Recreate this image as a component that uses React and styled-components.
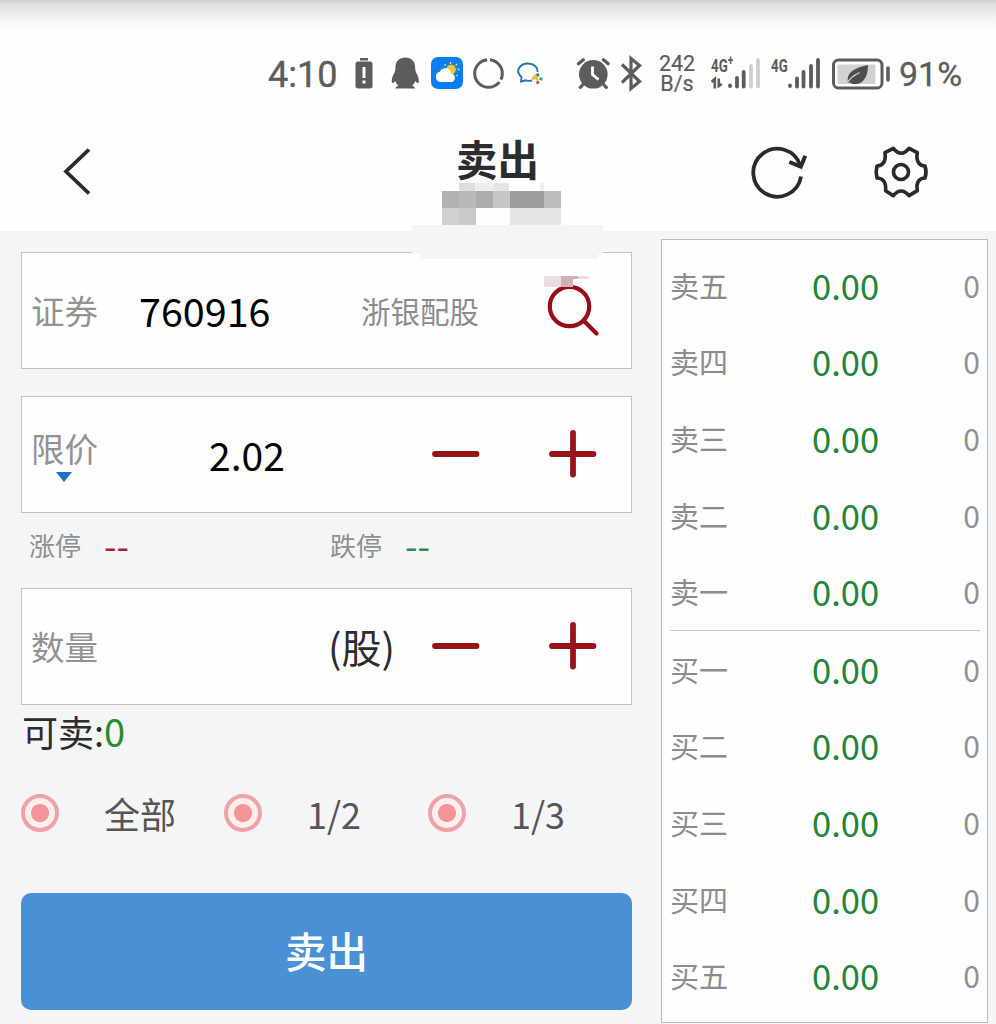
import styled, { createGlobalStyle } from "styled-components"

const sellRows = ["卖五", "卖四", "卖三", "卖二", "卖一"]
const buyRows = ["买一", "买二", "买三", "买四", "买五"]
const portions = [
    { label: "全部", width: 203 },
    { label: "1/2", width: 204 },
    { label: "1/3", width: 150 },
]

const StatusBar = () => {
    return (
        <StyledStatus>
            <Clock>4:10</Clock>
            <StatusIcon $left={18} width="18" height="40" viewBox="355 54 18 40">
                <path d="M360 58h8v2.500h-8z" fill="#5c5c5c" />
                <rect x="355.500" y="61.500" width="17" height="27" rx="2.500" fill="#5c5c5c" />
                <path d="M364 67v11M364 80.500v3" stroke="#fff" strokeWidth="3" />
            </StatusIcon>
            <StatusIcon $left={18} width="28" height="40" viewBox="391 54 28 40">
                <path d="M405.300 57.500c-6 0-9.800 4-9.800 9.500 0 3-.5 5-2 7.500-1.500 3-2.200 6-1.500 8.500 1.500 0 2.500-1 3.300-2 .7 2 1.700 3.500 3.200 4.700-1.500.5-3 1.500-3.200 2.800h20c-.2-1.300-1.700-2.300-3.200-2.800 1.500-1.200 2.500-2.700 3.200-4.700.8 1 1.800 2 3.300 2 .7-2.500 0-5.500-1.500-8.500-1.500-2.500-2-4.500-2-7.500 0-5.500-3.800-9.500-9.800-9.500z" fill="#5c5c5c" />
            </StatusIcon>
            <StatusIcon $left={12} width="32" height="40" viewBox="431 54 32 40">
                <rect x="431" y="57" width="32" height="32" rx="7" fill="#087ff0" />
                <circle cx="451" cy="69.500" r="4.800" fill="#ffc526" />
                <path d="M450.500 62v2M444.500 64l1.300 1.500M457 64l-1.300 1.500M459.500 69.500h-2M457.500 76l-1.300-1" stroke="#ffdc62" strokeWidth="1.300" />
                <path d="M440.500 82a5.200 5.200 0 0 1-.8-10.200 6 6 0 0 1 11.400 1.600 4.500 4.500 0 0 1 1 8.600z" fill="#fff" />
            </StatusIcon>
            <StatusIcon $left={10} width="32" height="40" viewBox="473 54 32 40">
                <circle cx="488.500" cy="73.500" r="13.800" fill="none" stroke="#5c5c5c" strokeWidth="3" />
                <path d="M488.500 57v5M498.500 80l6 3" stroke="#fff" strokeWidth="2.800" />
            </StatusIcon>
            <StatusIcon $left={12} width="27" height="40" viewBox="517 54 27 40">
                <path d="M532 80.500c-2 .6-4 .5-6-.2l-5 1.200.5-4.500c-7-6-1.500-13.500 6.500-13.500 6 0 10 4 9.500 8.500" fill="none" stroke="#1f76b4" strokeWidth="1.900" />
                <path d="M537 73.500l1.500 3" stroke="#2f86c0" strokeWidth="2.800" />
                <path d="M539.500 78.300l3 1" stroke="#5c9c63" strokeWidth="2.800" />
                <path d="M538.500 81l-1.500 2.800" stroke="#b3604a" strokeWidth="2.800" />
                <path d="M532.500 79.500l2.500-3.500 2.500 4" fill="none" stroke="#f0b82c" strokeWidth="2.600" />
            </StatusIcon>
            <StatusIcon $left={32} width="34" height="40" viewBox="576 54 34 40">
                <circle cx="593.300" cy="74.300" r="14.300" fill="#5c5c5c" />
                <path d="M578.500 63.800l4.800-4M608.200 63.800l-4.800-4M583 84.500l-2.700 2.800M603.600 84.500l2.700 2.800" stroke="#5c5c5c" strokeWidth="3.200" strokeLinecap="round" />
                <path d="M592.500 66.500v8l6 5" fill="none" stroke="#fff" strokeWidth="2.800" />
            </StatusIcon>
            <StatusIcon $left={11} width="21" height="40" viewBox="621 54 21 40">
                <path d="M622 64.500L639.500 81.500l-8.500 7V58.500l8.500 7L622 82.500" fill="none" stroke="#5c5c5c" strokeWidth="3.200" />
            </StatusIcon>
            <Speed>242 B/s</Speed>
            <Network $left={15}>
                <NetworkType>4G<sup>+</sup></NetworkType>
                <Bars width="50" height="40" viewBox="711 54 50 40">
                    <path d="M711.500 82l3.300-3v9.500M718.800 78.500v7.500l3-2" fill="none" stroke="#5c5c5c" strokeWidth="2.600" />
                    <g stroke="#5c5c5c" strokeWidth="3.800" strokeLinecap="round">
                        <path d="M730 86v-.5M737 86.500v-8.500M743.700 86.500v-14.500" />
                        <path d="M751 86.500V66M758 86.500V60" stroke="#cfcfcf" />
                    </g>
                </Bars>
            </Network>
            <Network $left={10}>
                <NetworkType>4G</NetworkType>
                <Bars width="50" height="40" viewBox="771 54 50 40">
                    <path d="M790 86v-.5M797 86.500v-8M803.500 86.500V72M811 86.500V66M818 86.500V60" stroke="#5c5c5c" strokeWidth="3.800" strokeLinecap="round" />
                </Bars>
            </Network>
            <StatusIcon $left={11} width="58" height="40" viewBox="832 54 58 40">
                <rect x="833.500" y="60" width="48.500" height="28" rx="5" fill="#fff" stroke="#5c5c5c" strokeWidth="3" />
                <rect x="837.500" y="64.500" width="38" height="19.500" rx="1" fill="#d2d2d2" />
                <path d="M848 83c-2-10 5-15 20-18 0 12-5 20-14 19-2 0-3-.6-4-1.500z" fill="#4d4d4d" />
                <path d="M847.500 83c2-5 7-8 12-10.500" fill="none" stroke="#d2d2d2" strokeWidth="1.300" />
                <path d="M888 68v12" stroke="#5c5c5c" strokeWidth="3.600" strokeLinecap="round" />
            </StatusIcon>
            <Percent>91%</Percent>
        </StyledStatus>
    )
}

const Redaction = () => {
    return (
        <Mosaic width="200" height="110" viewBox="410 180 200 110" shapeRendering="crispEdges">
            <path d="M459 183h16v8h-16z" fill="#dedede" />
            <path d="M475 183h18v8h-18zM540 183h4v8h-4z" fill="#eeeeee" />
            <path d="M493 183h16v8h-16z" fill="#e5e5e5" />
            <path d="M442 191h17v17h-17z" fill="#b2b2b2" />
            <path d="M459 191h17v17h-17z" fill="#b9b9b9" />
            <path d="M476 191h17v17h-17z" fill="#adadad" />
            <path d="M493 191h17v17h-17z" fill="#c6c6c6" />
            <path d="M510 191h34v17h-34z" fill="#9e9e9e" />
            <path d="M544 191h17v17h-17z" fill="#bdbdbd" />
            <path d="M442 208h17v17h-17z" fill="#d0d0d0" />
            <path d="M459 208h17v17h-17z" fill="#cacaca" />
            <path d="M510 208h51v17h-51z" fill="#e6e6e6" />
            <path d="M412 225h191v29h-5v5H420v-5h-8z" fill="#f4f5f5" />
            <path d="M544 276h17v11h-17zM578 276h11v3h-11z" fill="#ecdcdf" />
            <path d="M561 276h17v3h-5v8h-12z" fill="#d5adb5" />
        </Mosaic>
    )
}

const Header = () => {
    return (
        <StyledHeader>
            <StatusBar />
            <NavBar>
                <NavIcon width="28" height="50" viewBox="63 147 28 50">
                    <path d="M89 149.500L66 171.500l23 22" strokeWidth="3.800" />
                </NavIcon>
                <Title>卖出</Title>
                <Actions>
                    <NavIcon width="58" height="54" viewBox="750 145 58 54">
                        <path d="M801 176.500a24 24 0 1 1-.8-11" strokeWidth="3.800" />
                        <path d="M789.300 162l11.500 4.700 4.500-11" strokeWidth="4" />
                    </NavIcon>
                    <NavIcon width="56" height="54" viewBox="459 74 168 162">
                        <path
                            d="M471 137Q466 155 471 173C487 173 499 183 497 211L520 226Q543 198 567 226L592 211C587 184 600 173 615 173Q621 155 615 137C599 136 587 125 592 97L567 84Q543 113 520 84L495 97C499 125 487 136 471 137z"
                            strokeWidth="11"
                            strokeLinejoin="round"
                        />
                        <circle cx="543" cy="155" r="22.500" strokeWidth="11" />
                    </NavIcon>
                </Actions>
            </NavBar>
            <Redaction />
        </StyledHeader>
    )
}

const Stepper = () => {
    return (
        <StepperGroup>
            <StepIcon viewBox="0 0 48 48">
                <path d="M3 24h41.500" />
            </StepIcon>
            <StepIcon viewBox="0 0 48 48">
                <path d="M3 24h41.500M24 3v41.500" />
            </StepIcon>
        </StepperGroup>
    )
}

const OrderForm = () => {
    return (
        <Form>
            <Field>
                <FieldLabel>证券</FieldLabel>
                <Code>760916</Code>
                <StockName>浙银配股</StockName>
                <SearchIcon width="54" height="54" viewBox="546 283 54 54">
                    <circle cx="569.500" cy="306.500" r="19.700" />
                    <path d="M583.500 320.500L596.500 333.500" />
                </SearchIcon>
            </Field>
            <Field $top={27}>
                <PriceType>
                    <FieldLabel>限价</FieldLabel>
                    <Caret />
                </PriceType>
                <Price>2.02</Price>
                <Stepper />
            </Field>
            <Limits>
                <Limit>涨停<Dashes $color="#b01c2e">--</Dashes></Limit>
                <Limit>跌停<Dashes $color="#2f8a45">--</Dashes></Limit>
            </Limits>
            <Field>
                <FieldLabel>数量</FieldLabel>
                <Unit>(股)</Unit>
                <Stepper />
            </Field>
            <Available>可卖:<Amount>0</Amount></Available>
            <Portions>
                {portions.map(({ label, width }) => (
                    <Portion key={label} $width={width}>
                        <Radio />
                        {label}
                    </Portion>
                ))}
            </Portions>
            <SellButton>卖出</SellButton>
        </Form>
    )
}

const QuoteRow = ({ label }) => {
    return (
        <StyledRow>
            <Level>{label}</Level>
            <Quote>0.00</Quote>
            <Quantity>0</Quantity>
        </StyledRow>
    )
}

const App = () => {
    return (
        <>
            <GlobalStyle />
            <Page>
                <Header />
                <Main>
                    <OrderForm />
                    <Quotes>
                        <QuoteGroup>
                            {sellRows.map((label) => <QuoteRow key={label} label={label} />)}
                        </QuoteGroup>
                        <Divider />
                        <QuoteGroup>
                            {buyRows.map((label) => <QuoteRow key={label} label={label} />)}
                        </QuoteGroup>
                    </Quotes>
                </Main>
            </Page>
        </>
    )
}

export default App

const GlobalStyle = createGlobalStyle`
    * {
        box-sizing: border-box;
    }
    body {
        margin: 0;
        font-family: 'Noto Sans CJK SC', sans-serif;
    }
`
const Page = styled.div`
    width: 996px;
    height: 1024px;
    overflow: hidden;
    background-color: #f3f5f7;
`
const StyledHeader = styled.header`
    position: relative;
    height: 231px;
    background: linear-gradient(#cdcdcd 0px, #dedede 4px, #eeeeee 14px, #f8f8f8 24px, #fefefe 31px);
`
const StyledStatus = styled.div`
    height: 114px;
    padding: 54px 0 0 267px;
    display: flex;
    align-items: flex-start;
    color: #5c5c5c;
    font-family: Roboto, sans-serif;
`
const Clock = styled.div`
    width: 70px;
    padding-left: 1px;
    font-size: 36px;
    line-height: 42px;
    -webkit-text-stroke: 0.4px #5c5c5c;
`
const StatusIcon = styled.svg`
    flex: none;
    margin-left: ${(p) => p.$left}px;
`
const Speed = styled.div`
    width: 38px;
    margin-left: 16px;
    font-size: 21.5px;
    line-height: 20px;
    text-align: center;
    -webkit-text-stroke: 0.2px #5c5c5c;
`
const Network = styled.div`
    position: relative;
    flex: none;
    width: 50px;
    height: 40px;
    margin-left: ${(p) => p.$left}px;
`
const NetworkType = styled.div`
    width: 30px;
    font-size: 18px;
    line-height: 23px;
    font-weight: 700;
    transform: scaleX(0.74);
    transform-origin: left;
    white-space: nowrap;

    sup {
        font-size: 14px;
        line-height: 0;
    }
`
const Bars = styled.svg`
    position: absolute;
    top: 0;
    left: 0;
`
const Percent = styled.div`
    margin-left: 9px;
    font-size: 34px;
    line-height: 41px;
    -webkit-text-stroke: 0.3px #5c5c5c;
`
const NavBar = styled.div`
    height: 116px;
    padding: 0 67px 0 63px;
    display: grid;
    grid-template-columns: 1fr 90px 1fr;
    align-items: center;
`
const NavIcon = styled.svg`
    fill: none;
    stroke: #2a2a2a;
`
const Title = styled.h1`
    margin: 0 0 28px;
    padding-left: 3px;
    font-size: 41.5px;
    line-height: 60px;
    font-weight: 700;
    text-align: center;
    color: #2c2c2c;
`
const Actions = styled.div`
    display: flex;
    justify-content: flex-end;
    gap: 65px;
`
const Mosaic = styled.svg`
    position: absolute;
    top: 180px;
    left: 410px;
    z-index: 1;
`
const Main = styled.main`
    display: flex;
    gap: 29px;
    padding: 8px 8px 0 21px;
`
const Form = styled.section`
    width: 611px;
    padding-top: 13px;
`
const Field = styled.div`
    height: 117px;
    margin-top: ${(p) => p.$top || 0}px;
    padding: 0 34px 2px 9px;
    display: flex;
    align-items: center;
    background-color: #fefefe;
    border: 1px solid #bfc3c3;
`
const FieldLabel = styled.div`
    font-size: 33.5px;
    line-height: 48px;
    color: #929292;
`
const Code = styled.div`
    width: 222px;
    margin-left: 41px;
    font-size: 39.5px;
    line-height: 58px;
    color: #000;
`
const StockName = styled.div`
    font-size: 29.5px;
    line-height: 44px;
    color: #8c8c8c;
`
const SearchIcon = styled.svg`
    margin-left: auto;
    margin-right: -3px;
    fill: none;
    stroke: #960d1c;
    stroke-width: 4.2;
    stroke-linecap: round;
`
const PriceType = styled.div`
    height: 60px;
    display: flex;
    flex-direction: column;
    align-items: center;
`
const Caret = styled.div`
    margin-right: 2px;
    border: 8.5px solid transparent;
    border-top: 10px solid #1f70c1;
    border-bottom: 0;
`
const Price = styled.div`
    margin-left: 111px;
    font-size: 39px;
    line-height: 58px;
    color: #000;
`
const StepperGroup = styled.div`
    margin-left: auto;
    display: flex;
    gap: 69px;
`
const StepIcon = styled.svg`
    width: 48px;
    height: 48px;
    fill: none;
    stroke: #951519;
    stroke-width: 5.8;
    stroke-linecap: round;
`
const Limits = styled.div`
    height: 75px;
    padding: 0 0 11px 8px;
    display: flex;
    align-items: center;
`
const Limit = styled.div`
    width: 301px;
    display: flex;
    align-items: center;
    font-size: 26px;
    line-height: 38px;
    color: #8f8f8f;
`
const Dashes = styled.span`
    margin-left: 23px;
    padding-bottom: 3px;
    font-size: 36px;
    color: ${(p) => p.$color};
`
const Unit = styled.div`
    margin-left: 230px;
    font-size: 40px;
    line-height: 58px;
    color: #2c2c2c;
`
const Available = styled.div`
    height: 54px;
    padding-left: 1px;
    font-size: 36px;
    line-height: 51px;
    color: #2c2c2c;
`
const Amount = styled.span`
    font-size: 38px;
    color: #24902f;
`
const Portions = styled.div`
    height: 134px;
    padding-bottom: 26px;
    display: flex;
    align-items: center;
`
const Portion = styled.div`
    width: ${(p) => p.$width}px;
    display: flex;
    align-items: center;
    gap: 45px;
    font-size: 36px;
    line-height: 52px;
    color: #555;
    white-space: nowrap;
`
const Radio = styled.span`
    width: 38px;
    height: 38px;
    border: 4px solid #efa3a7;
    border-radius: 50%;
    background: radial-gradient(circle, #f39496 8.5px, #fbefed 9.5px);
`
const SellButton = styled.button`
    display: block;
    width: 611px;
    height: 117px;
    padding: 0 0 4px;
    border: 0;
    border-radius: 10px;
    background-color: #4990d5;
    color: #fff;
    font-family: inherit;
    font-size: 41.5px;
    font-weight: 500;
`
const Quotes = styled.section`
    width: 327px;
    height: 784px;
    padding: 7px 7px 0 8px;
    background-color: #fefefe;
    border: 1px solid #bcbcbc;
`
const QuoteGroup = styled.div`
    display: grid;
    grid-auto-rows: 76.600px;
`
const StyledRow = styled.div`
    padding-bottom: 1px;
    display: grid;
    grid-template-columns: 142px 1fr auto;
    align-items: center;
    line-height: 50px;
`
const Level = styled.div`
    font-size: 29px;
    color: #8c8c8c;
`
const Quote = styled.div`
    font-size: 34.5px;
    color: #23843a;
`
const Quantity = styled.div`
    font-size: 30px;
    color: #919191;
`
const Divider = styled.div`
    height: 1px;
    background-color: #c4c4c4;
`
